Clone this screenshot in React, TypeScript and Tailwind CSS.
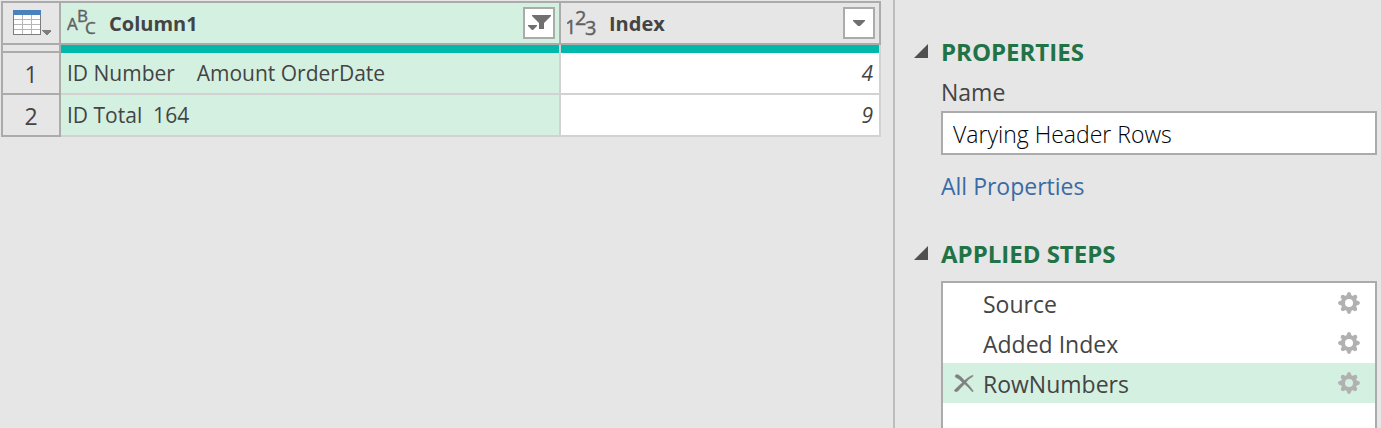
import { useState } from "react";

type Step = { name: string; selected?: boolean };

const steps: Step[] = [
  { name: "Source" },
  { name: "Added Index" },
  { name: "RowNumbers", selected: true },
];

const rows = [
  { number: 1, text: "ID Number    Amount OrderDate", index: 4 },
  { number: 2, text: "ID Total  164", index: 9 },
];

function TableIcon() {
  return (
    <svg width="38" height="26" viewBox="0 0 38 26" shapeRendering="crispEdges" aria-hidden="true">
      <rect x="0" y="0" width="28" height="25" fill="#7d7d7d" />
      <rect x="1" y="5" width="26" height="19" fill="#b5b5b5" />
      {[5, 10, 15, 20].map((y) =>
        [1, 10, 19].map((x) => (
          <rect key={`${x}-${y}`} x={x} y={y} width="8" height="4" fill="#fff" />
        )),
      )}
      <rect x="0" y="0" width="28" height="5" fill="#4a82bd" />
      <path d="M29 20h9v1l-4 4h-1l-4-4z" fill="#7d7d7d" />
    </svg>
  );
}

function TextTypeIcon() {
  return (
    <svg width="30" height="40" viewBox="0 0 30 40" fill="#606060" stroke="#606060" strokeWidth="0.400" fontSize="17" fontWeight="400" aria-hidden="true">
      <text x="0" y="27">A</text>
      <text x="10" y="19">B</text>
      <text x="18" y="31">C</text>
    </svg>
  );
}

function NumberTypeIcon() {
  return (
    <svg width="30" height="40" viewBox="0 0 30 40" fill="#606060" stroke="#606060" strokeWidth="0.400" fontSize="20" fontWeight="400" aria-hidden="true">
      <text x="-2" y="31">1</text>
      <text x="8" y="22">2</text>
      <text x="18" y="32">3</text>
    </svg>
  );
}

function FilterIcon() {
  return (
    <svg width="24" height="16" viewBox="0 0 24 16" fill="#707070" aria-hidden="true">
      <path d="M5 0h19v1l-7 7v6h-5V8L5 1z" />
      <path d="M1 10h9v1l-4 4H5l-4-4z" />
    </svg>
  );
}

function DownIcon() {
  return (
    <svg width="12" height="6" viewBox="0 0 12 6" fill="#707070" aria-hidden="true">
      <path d="M0 0h12v1L7 6H5L0 1z" />
    </svg>
  );
}

function GearIcon() {
  return (
    <svg width="22" height="22" viewBox="0 0 22 22" aria-hidden="true">
      <g fill="#b1b1b1">
        {[0, 45, 90, 135, 180, 225, 270, 315].map((angle) => (
          <path key={angle} transform={`rotate(${angle} 11 11)`} d="M8 5L9.300 1Q11-.8 12.700 1L14 5z" />
        ))}
      </g>
      <circle cx="11" cy="11" r="6" fill="none" stroke="#b1b1b1" strokeWidth="4" />
    </svg>
  );
}

function DeleteIcon() {
  return (
    <svg width="20" height="18" viewBox="0 0 20 18" fill="#808080" stroke="#808080" strokeWidth="0.400" aria-hidden="true">
      <path d="M1 2Q2-.5 4.500 1Q8 3 10.500 6.500Q14 3 18.500 1.200Q19.500 1.500 19 2.300Q15 4.500 12 8.200Q16 12 19.300 17Q19 18.300 18 17.500Q14.500 13 10.500 10Q7 13.500 4 17Q2 18.500.500 17Q.300 16 1.500 15Q5 11.500 8.500 8.500Q6 5 1.500 3.300Z" />
    </svg>
  );
}

function SectionHeading({ title, open, onToggle }: { title: string; open: boolean; onToggle: () => void }) {
  return (
    <h2>
      <button type="button" aria-expanded={open} onClick={onToggle} className="flex h-8 items-center gap-[13px] text-2xl font-bold text-[#217346]">
        <svg className="mb-0.5" width="14" height="14" viewBox="0 0 14 14" fill="#505050" aria-hidden="true">
          <path d="M14 0v14H0z" />
        </svg>
        {title}
      </button>
    </h2>
  );
}

function HeaderButton({ label, children }: { label: string; children: React.ReactNode }) {
  return (
    <button type="button" aria-label={label} className="flex size-8 items-center justify-center border-2 border-[#ababab] bg-white">
      {children}
    </button>
  );
}

function DataTable() {
  return (
    <table className="w-full table-fixed border-separate border-spacing-0 text-[21px] text-[#444]">
      <colgroup>
        <col className="w-15" />
        <col />
        <col className="w-80" />
      </colgroup>
      <thead>
        <tr>
          <th className="h-11 border-2 border-[#ababab] p-0">
            <button type="button" aria-label="Table options" className="ml-2.5 flex items-center">
              <TableIcon />
            </button>
          </th>
          <th className="border-y-2 border-r-2 border-[#ababab] bg-[#d4f0e1] p-0">
            <div className="flex items-center pr-1 pl-1.5">
              <TextTypeIcon />
              <span className="ml-3 flex-1 pt-0.5 text-left text-xl">Column1</span>
              <HeaderButton label="Filter Column1"><FilterIcon /></HeaderButton>
            </div>
          </th>
          <th className="border-y-2 border-r-2 border-[#ababab] p-0">
            <div className="flex items-center pr-1 pl-1.5">
              <NumberTypeIcon />
              <span className="ml-3 flex-1 pt-0.5 text-left text-xl">Index</span>
              <HeaderButton label="Filter Index"><DownIcon /></HeaderButton>
            </div>
          </th>
        </tr>
      </thead>
      <tbody>
        <tr>
          <td className="h-2 border-x-2 border-b-2 border-[#ababab] p-0" />
          <td className="border-r-2 border-[#d2d2d2] bg-[#01b8aa] p-0" />
          <td className="border-r-2 border-[#d2d2d2] bg-[#01b8aa] p-0" />
        </tr>
        {rows.map((row) => (
          <tr key={row.number}>
            <th scope="row" className="h-[42px] border-x-2 border-b-2 border-[#ababab] px-0 pt-0.5 pb-0 text-[23px] leading-7 font-normal">{row.number}</th>
            <td className="border-r-2 border-b-2 border-[#d2d2d2] bg-[#d4f0e1] px-1.5 py-0 leading-7 whitespace-pre">{row.text}</td>
            <td className="border-r-2 border-b-2 border-[#d2d2d2] bg-white px-1.5 py-0 text-right leading-7 italic">{row.index}</td>
          </tr>
        ))}
      </tbody>
    </table>
  );
}

export default function App() {
  const [name, setName] = useState("Varying Header Rows");
  const [showProperties, setShowProperties] = useState(true);
  const [showSteps, setShowSteps] = useState(true);

  return (
    <div className="flex h-screen overflow-hidden bg-[#e6e6e6] font-['Open_Sans','Noto_Sans',sans-serif] text-[#444]">
      <main className="min-w-0 flex-1 pt-px pr-3 pl-px">
        <DataTable />
      </main>
      <aside className="flex w-122 flex-col border-l-2 border-[#bdbdbd] pt-9 pr-1 pl-[19px] text-[23px] leading-8">
        <SectionHeading title="PROPERTIES" open={showProperties} onToggle={() => setShowProperties(!showProperties)} />
        {showProperties && (
          <div className="flex flex-col items-start pt-2 pl-[27px]">
            <label htmlFor="query-name">Name</label>
            <input
              id="query-name"
              value={name}
              onChange={(event) => setName(event.target.value)}
              className="mt-[3px] h-11 w-full border-2 border-[#ababab] bg-white px-2.5 pt-0.5 font-light text-black"
            />
            <a href="#all-properties" className="mt-[15px] text-[#3a6ba5]">All Properties</a>
          </div>
        )}
        <div className="mt-9 flex min-h-0 flex-1 flex-col">
          <SectionHeading title="APPLIED STEPS" open={showSteps} onToggle={() => setShowSteps(!showSteps)} />
          {showSteps && (
            <ul className="mt-[11px] ml-[27px] flex-1 border-2 border-b-0 border-[#ababab] bg-white">
              {steps.map((step) => (
                <li key={step.name} className={step.selected ? "flex h-10 items-center bg-[#d4f0e1] pr-[15px] pl-[11px]" : "flex h-10 items-center pr-[15px] pl-[11px]"}>
                  <span className="flex w-[29px] items-center">
                    {step.selected && <button type="button" aria-label="Delete step"><DeleteIcon /></button>}
                  </span>
                  <span className="flex-1 pt-0.5">{step.name}</span>
                  <button type="button" aria-label={`Edit settings for ${step.name}`}><GearIcon /></button>
                </li>
              ))}
            </ul>
          )}
        </div>
      </aside>
    </div>
  );
}
